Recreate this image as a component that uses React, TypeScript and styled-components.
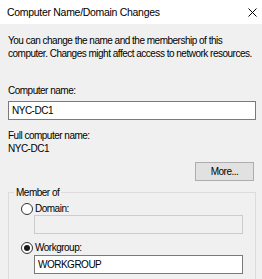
import * as React from 'react';
import styled, { createGlobalStyle } from 'styled-components';

const GlobalStyle = createGlobalStyle`
  html, body {
    margin: 0;
    padding: 0;
    background: #f0f0f0;
  }
  body {
    font-family: 'Liberation Sans', Arial, sans-serif;
    font-size: 10px;
    letter-spacing: -0.5px;
    color: #000;
  }
`;

const Dialog = styled.div`
  width: 262px;
  height: 279px;
  overflow: hidden;
  background: #f0f0f0;
  display: flex;
  flex-direction: column;
`;

const TitleBar = styled.div`
  height: 24px;
  flex: none;
  background: #fff;
  display: flex;
  align-items: center;
  justify-content: space-between;
  padding: 0 5px 0 7px;
  font-size: 10.5px;
  letter-spacing: -0.3px;
`;

const CloseIcon = styled.svg`
  width: 9px;
  height: 9px;
  margin-top: 1px;
`;

const Body = styled.div`
  padding: 10px 6px 0 8px;
  display: flex;
  flex-direction: column;
`;

const Text = styled.div<{ $top?: number }>`
  line-height: 13px;
  margin-top: ${p => p.$top || 0}px;
  white-space: nowrap;
`;

const TextBox = styled.div<{ $top?: number; $disabled?: boolean; $indent?: number }>`
  height: 19px;
  box-sizing: border-box;
  margin-top: ${p => p.$top || 0}px;
  margin-left: ${p => p.$indent || 0}px;
  border: 1px solid ${p => (p.$disabled ? '#cccccc' : '#7a7a7a')};
  background: ${p => (p.$disabled ? '#f0f0f0' : '#fff')};
  padding: 0 3px;
  line-height: 17px;
`;

const ButtonRow = styled.div`
  display: flex;
  justify-content: flex-end;
  margin-top: 7px;
  padding-right: 2px;
`;

const Button = styled.button`
  width: 59px;
  height: 19px;
  box-sizing: border-box;
  border: 1px solid #adadad;
  background: #e1e1e1;
  font: inherit;
  letter-spacing: inherit;
  padding: 0;
  color: #000;
`;

const Group = styled.fieldset`
  margin: 5px 0 0 0;
  padding: 0 12px 20px 5px;
  border: 1px solid #dcdcdc;
  min-width: 0;
`;

const Legend = styled.legend`
  padding: 0 2px;
  line-height: 13px;
`;

const RadioRow = styled.label<{ $top?: number }>`
  display: flex;
  align-items: center;
  gap: 2px;
  margin-top: ${p => p.$top || 0}px;
  margin-left: 7px;
  line-height: 13px;
`;

const RadioCircle = styled.span<{ $checked?: boolean }>`
  width: 12px;
  height: 12px;
  box-sizing: border-box;
  border: 1px solid #333;
  border-radius: 50%;
  background: #fff;
  display: flex;
  align-items: center;
  justify-content: center;

  &::after {
    content: '';
    display: ${p => (p.$checked ? 'block' : 'none')};
    width: 6px;
    height: 6px;
    border-radius: 50%;
    background: #1a1a1a;
  }
`;

const Radio = ({ label, checked, top }: { label: string; checked?: boolean; top?: number }) => (
  <RadioRow $top={top}>
    <RadioCircle $checked={checked} />
    <span>{label}</span>
  </RadioRow>
);

export default function App() {
  return (
    <Dialog>
      <GlobalStyle />
      <TitleBar>
        <span>Computer Name/Domain Changes</span>
        <CloseIcon viewBox="0 0 9 9">
          <path d="M0.5 0.5 L8.5 8.5 M8.5 0.5 L0.5 8.5" stroke="#000" strokeWidth="1" />
        </CloseIcon>
      </TitleBar>
      <Body>
        <Text>You can change the name and the membership of this</Text>
        <Text>computer. Changes might affect access to network resources.</Text>
        <Text $top={24}>Computer name:</Text>
        <TextBox $top={4}>NYC-DC1</TextBox>
        <Text $top={9}>Full computer name:</Text>
        <Text>NYC-DC1</Text>
        <ButtonRow>
          <Button>More...</Button>
        </ButtonRow>
        <Group>
          <Legend>Member of</Legend>
          <Radio label="Domain:" top={3} />
          <TextBox $indent={20} $disabled />
          <Radio label="Workgroup:" top={7} checked />
          <TextBox $indent={20} $top={1}>WORKGROUP</TextBox>
        </Group>
      </Body>
    </Dialog>
  );
}
